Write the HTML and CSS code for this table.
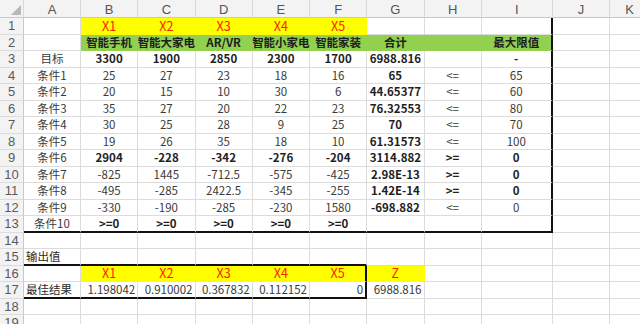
FILE: index.html
```html
<!DOCTYPE html>
<html lang="zh-CN">
<head>
<meta charset="utf-8">
<title>规划求解</title>
<link rel="stylesheet" href="styles.css">
</head>
<body>
<div class="sheet">
  <!-- header -->
  <div class="h corner"><svg width="10" height="10" viewBox="0 0 10 10"><polygon points="10,0 10,10 0,10" fill="#b8b8b8"/></svg></div>
  <div class="h">A</div><div class="h">B</div><div class="h">C</div><div class="h">D</div><div class="h">E</div><div class="h">F</div><div class="h">G</div><div class="h">H</div><div class="h">I</div><div class="h">J</div><div class="h">K</div>

  <!-- 1 -->
  <div class="n">1</div>
  <div class="c"></div>
  <div class="c y r">X1</div><div class="c y r">X2</div><div class="c y r">X3</div><div class="c y r">X4</div><div class="c y r">X5</div>
  <div class="c"></div><div class="c"></div><div class="c tr"></div><div class="c"></div><div class="c"></div>

  <!-- 2 -->
  <div class="n">2</div>
  <div class="c"></div>
  <div class="c g b">智能手机</div><div class="c g b">智能大家电</div><div class="c g b">AR/VR</div><div class="c g b">智能小家电</div><div class="c g b">智能家装</div>
  <div class="c g b">合计</div><div class="c g"></div><div class="c g b tr">最大限值</div><div class="c"></div><div class="c"></div>

  <!-- 3 -->
  <div class="n">3</div>
  <div class="c">目标</div>
  <div class="c b">3300</div><div class="c b">1900</div><div class="c b">2850</div><div class="c b">2300</div><div class="c b">1700</div>
  <div class="c b">6988.816</div><div class="c"></div><div class="c b tr">-</div><div class="c"></div><div class="c"></div>

  <!-- 4 -->
  <div class="n">4</div>
  <div class="c">条件1</div>
  <div class="c">25</div><div class="c">27</div><div class="c">23</div><div class="c">18</div><div class="c">16</div>
  <div class="c b">65</div><div class="c">&lt;=</div><div class="c tr">65</div><div class="c"></div><div class="c"></div>

  <!-- 5 -->
  <div class="n">5</div>
  <div class="c">条件2</div>
  <div class="c">20</div><div class="c">15</div><div class="c">10</div><div class="c">30</div><div class="c">6</div>
  <div class="c b">44.65377</div><div class="c">&lt;=</div><div class="c tr">60</div><div class="c"></div><div class="c"></div>

  <!-- 6 -->
  <div class="n">6</div>
  <div class="c">条件3</div>
  <div class="c">35</div><div class="c">27</div><div class="c">20</div><div class="c">22</div><div class="c">23</div>
  <div class="c b">76.32553</div><div class="c">&lt;=</div><div class="c tr">80</div><div class="c"></div><div class="c"></div>

  <!-- 7 -->
  <div class="n">7</div>
  <div class="c">条件4</div>
  <div class="c">30</div><div class="c">25</div><div class="c">28</div><div class="c">9</div><div class="c">25</div>
  <div class="c b">70</div><div class="c">&lt;=</div><div class="c tr">70</div><div class="c"></div><div class="c"></div>

  <!-- 8 -->
  <div class="n">8</div>
  <div class="c">条件5</div>
  <div class="c">19</div><div class="c">26</div><div class="c">35</div><div class="c">18</div><div class="c">10</div>
  <div class="c b">61.31573</div><div class="c">&lt;=</div><div class="c tr">100</div><div class="c"></div><div class="c"></div>

  <!-- 9 -->
  <div class="n">9</div>
  <div class="c">条件6</div>
  <div class="c b">2904</div><div class="c b">-228</div><div class="c b">-342</div><div class="c b">-276</div><div class="c b">-204</div>
  <div class="c b">3114.882</div><div class="c b">&gt;=</div><div class="c b tr">0</div><div class="c"></div><div class="c"></div>

  <!-- 10 -->
  <div class="n">10</div>
  <div class="c">条件7</div>
  <div class="c">-825</div><div class="c">1445</div><div class="c">-712.5</div><div class="c">-575</div><div class="c">-425</div>
  <div class="c b">2.98E-13</div><div class="c b">&gt;=</div><div class="c b tr">0</div><div class="c"></div><div class="c"></div>

  <!-- 11 -->
  <div class="n">11</div>
  <div class="c">条件8</div>
  <div class="c">-495</div><div class="c">-285</div><div class="c">2422.5</div><div class="c">-345</div><div class="c">-255</div>
  <div class="c b">1.42E-14</div><div class="c b">&gt;=</div><div class="c b tr">0</div><div class="c"></div><div class="c"></div>

  <!-- 12 -->
  <div class="n">12</div>
  <div class="c">条件9</div>
  <div class="c">-330</div><div class="c">-190</div><div class="c">-285</div><div class="c">-230</div><div class="c">1580</div>
  <div class="c b">-698.882</div><div class="c">&lt;=</div><div class="c tr">0</div><div class="c"></div><div class="c"></div>

  <!-- 13 -->
  <div class="n">13</div>
  <div class="c tb">条件10</div>
  <div class="c b tb">&gt;=0</div><div class="c b tb">&gt;=0</div><div class="c b tb">&gt;=0</div><div class="c b tb">&gt;=0</div><div class="c b tb">&gt;=0</div>
  <div class="c tb"></div><div class="c tb"></div><div class="c tb tr"></div><div class="c"></div><div class="c"></div>

  <!-- 14 -->
  <div class="n">14</div>
  <div class="c"></div><div class="c"></div><div class="c"></div><div class="c"></div><div class="c"></div><div class="c"></div><div class="c"></div><div class="c"></div><div class="c"></div><div class="c"></div><div class="c"></div>

  <!-- 15 -->
  <div class="n">15</div>
  <div class="c l tb">输出值</div>
  <div class="c tb"></div><div class="c tb"></div><div class="c tb"></div><div class="c tb"></div><div class="c tb"></div>
  <div class="c"></div><div class="c"></div><div class="c"></div><div class="c"></div><div class="c"></div>

  <!-- 16 -->
  <div class="n">16</div>
  <div class="c"></div>
  <div class="c y r">X1</div><div class="c y r">X2</div><div class="c y r">X3</div><div class="c y r">X4</div><div class="c y r tr">X5</div>
  <div class="c y r">Z</div><div class="c"></div><div class="c"></div><div class="c"></div><div class="c"></div>

  <!-- 17 -->
  <div class="n">17</div>
  <div class="c l tb">最佳结果</div>
  <div class="c rt tb">1.198042</div><div class="c rt tb">0.910002</div><div class="c rt tb">0.367832</div><div class="c rt tb">0.112152</div><div class="c rt tb tr">0</div>
  <div class="c rt">6988.816</div><div class="c"></div><div class="c"></div><div class="c"></div><div class="c"></div>

  <!-- 18 -->
  <div class="n">18</div>
  <div class="c"></div><div class="c"></div><div class="c"></div><div class="c"></div><div class="c"></div><div class="c"></div><div class="c"></div><div class="c"></div><div class="c"></div><div class="c"></div><div class="c"></div>

  <!-- 19 -->
  <div class="n">19</div>
  <div class="c"></div><div class="c"></div><div class="c"></div><div class="c"></div><div class="c"></div><div class="c"></div><div class="c"></div><div class="c"></div><div class="c"></div><div class="c"></div><div class="c"></div>
</div>
</body>
</html>
```
FILE: styles.css
```css
html, body {
  margin: 0;
  padding: 0;
  background: #ffffff;
  overflow: hidden;
}

.sheet {
  display: grid;
  grid-template-columns: 24px 57px repeat(7, 57.25px) 71px 57.3px 40px;
  grid-template-rows: 18px repeat(19, 16.5px);
  width: 640px;
  font-family: "Noto Sans CJK SC", "Noto Sans", sans-serif;
  font-size: 11.5px;
  color: #3a3a3a;
}

.sheet > div {
  box-sizing: border-box;
  display: flex;
  align-items: center;
  justify-content: center;
  white-space: nowrap;
  line-height: 1;
  min-width: 0;
}

.h {
  background: #f3f3f3;
  border-right: 1px solid #d8d8d8;
  border-bottom: 1px solid #c8c8c8;
  color: #555555;
  font-family: "Liberation Sans", "Noto Sans", sans-serif;
  font-size: 13px;
  padding-top: 1px;
}

.corner {
  justify-content: flex-end !important;
  align-items: flex-end !important;
  padding: 0 2px 2px 0;
}

.n {
  background: #f3f3f3;
  border-right: 1px solid #c8c8c8;
  border-bottom: 1px solid #dcdcdc;
  color: #5a5a5a;
  font-family: "Liberation Sans", "Noto Sans", sans-serif;
  font-size: 13px;
}

.c {
  border-right: 1px solid #dcdcdc;
  border-bottom: 1px solid #dcdcdc;
}

.y {
  background: #ffff00;
  border-right-color: #ffff00;
  border-bottom-color: #ffff00;
}

.g {
  background: #92d050;
  border-right-color: #92d050;
  border-bottom-color: #92d050;
}

.r {
  color: #ff2000;
  font-size: 12.5px;
}

.b {
  font-weight: bold;
  color: #1e1e1e;
}

.l {
  justify-content: flex-start !important;
  padding-left: 2px;
  color: #2a2a2a;
}

.rt {
  justify-content: flex-end !important;
  padding-right: 2px;
}

.tb {
  border-bottom: 2px solid #111111;
}

.tr {
  border-right: 2px solid #111111;
}
```
